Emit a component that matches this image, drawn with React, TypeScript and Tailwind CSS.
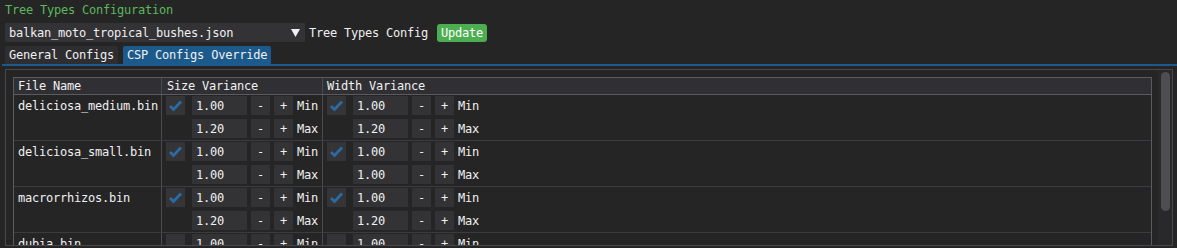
import React from "react";

const FONT = { fontFamily: '"DejaVu Sans Mono", "Liberation Mono", monospace' };

function Check({ checked }: { checked: boolean }) {
  return (
    <div className="w-[19px] h-[19px] bg-[#353538] shrink-0 flex items-center justify-center">
      {checked && (
        <svg width="19" height="19" viewBox="0 0 19 19">
          <polyline points="4,10 7.5,13.5 15,5.5" fill="none" stroke="#2c6aa3" strokeWidth="2.8" strokeLinecap="butt" strokeLinejoin="miter" />
        </svg>
      )}
    </div>
  );
}

function Line({ check, value, label }: { check: boolean | null; value: string; label: string }) {
  return (
    <div className="flex items-center h-[19px]">
      {check === null ? <div className="w-[19px] h-[19px] shrink-0" /> : <Check checked={check} />}
      <div className="ml-[7px] w-[55px] h-[19px] bg-[#333336] flex items-center pl-[4px]">{value}</div>
      <div className="ml-[4px] w-[19px] h-[19px] bg-[#333336] flex items-center justify-center">-</div>
      <div className="ml-[4px] w-[19px] h-[19px] bg-[#333336] flex items-center justify-center">+</div>
      <div className="ml-[4px]">{label}</div>
    </div>
  );
}

function VarCell({ checked, min, max }: { checked: boolean; min: string; max: string }) {
  return (
    <div className="w-full pl-[4px] pt-[1px] flex flex-col gap-[4px]">
      <Line check={checked} value={min} label="Min" />
      <Line check={null} value={max} label="Max" />
    </div>
  );
}

const rows = [
  { name: "deliciosa_medium.bin", c: true, s: ["1.00", "1.20"], wv: ["1.00", "1.20"] },
  { name: "deliciosa_small.bin", c: true, s: ["1.00", "1.00"], wv: ["1.00", "1.00"] },
  { name: "macrorrhizos.bin", c: true, s: ["1.00", "1.20"], wv: ["1.00", "1.20"] },
  { name: "dubia.bin", c: false, s: ["1.00", "1.20"], wv: ["1.00", "1.20"] },
];

export default function App() {
  return (
    <div className="w-[1177px] h-[248px] bg-[#252526] overflow-hidden text-[12px] tracking-[-0.22px] text-[#f0f0f0]" style={FONT}>
      <div className="ml-[5px] mt-[2px] h-[17px] leading-[17px] text-[#5cb85c]">Tree Types Configuration</div>
      <div className="ml-[5px] mt-[4px] flex items-center h-[19px]">
        <div className="w-[300px] h-[19px] bg-[#333336] flex items-center">
          <div className="flex-1 pl-[4px]">balkan_moto_tropical_bushes.json</div>
          <div className="w-[19px] h-[19px] flex items-center justify-center">
            <svg width="9" height="8" viewBox="0 0 9 8">
              <polygon points="0,0 9,0 4.5,8" fill="#f0f0f0" />
            </svg>
          </div>
        </div>
        <div className="ml-[4px]">Tree Types Config</div>
        <div className="ml-[9px] h-[18px] px-[4px] bg-[#4cae50] rounded-[3px] flex items-center text-white">Update</div>
      </div>
      <div className="ml-[5px] mt-[4px] flex h-[18px]">
        <div className="h-[18px] px-[4px] bg-[#2e2e31] rounded-t-[2px] flex items-center">General Configs</div>
        <div className="ml-[5px] h-[18px] px-[4px] bg-[#1c5a8b] rounded-t-[2px] flex items-center">CSP Configs Override</div>
      </div>
      <div className="ml-[2px] h-[2px] bg-[#1c5a8b]" />
      <div className="ml-[5px] mt-[3px] w-[1168px] h-[177px] border border-[#48484d] flex overflow-hidden">
        <div className="flex-1 pl-[7px] pt-[7px] pr-[6px] overflow-hidden">
          <div className="border-x border-t border-[#5a5a60]">
            <div className="flex h-[17px] bg-[#303034] border-b border-[#5a5a60] items-center">
              <div className="w-[148px] pl-[4px] border-r border-[#4a4a4f] h-full flex items-center">File Name</div>
              <div className="w-[161px] pl-[5px] border-r border-[#4a4a4f] h-full flex items-center">Size Variance</div>
              <div className="flex-1 pl-[4px] h-full flex items-center">Width Variance</div>
            </div>
            {rows.map((r) => (
              <div key={r.name} className="flex h-[46px] border-b border-[#3c3c40]">
                <div className="w-[148px] pl-[4px] pt-[1px] border-r border-[#4a4a4f]">
                  <div className="h-[19px] flex items-center">{r.name}</div>
                </div>
                <div className="w-[161px] border-r border-[#4a4a4f] flex">
                  <VarCell checked={r.c} min={r.s[0]} max={r.s[1]} />
                </div>
                <div className="flex-1 flex">
                  <VarCell checked={r.c} min={r.wv[0]} max={r.wv[1]} />
                </div>
              </div>
            ))}
          </div>
        </div>
        <div className="w-[14px] h-full bg-[#29292b] pt-[2px] flex justify-center">
          <div className="w-[9px] h-[139px] bg-[#4e4e52] rounded-full" />
        </div>
      </div>
    </div>
  );
}
